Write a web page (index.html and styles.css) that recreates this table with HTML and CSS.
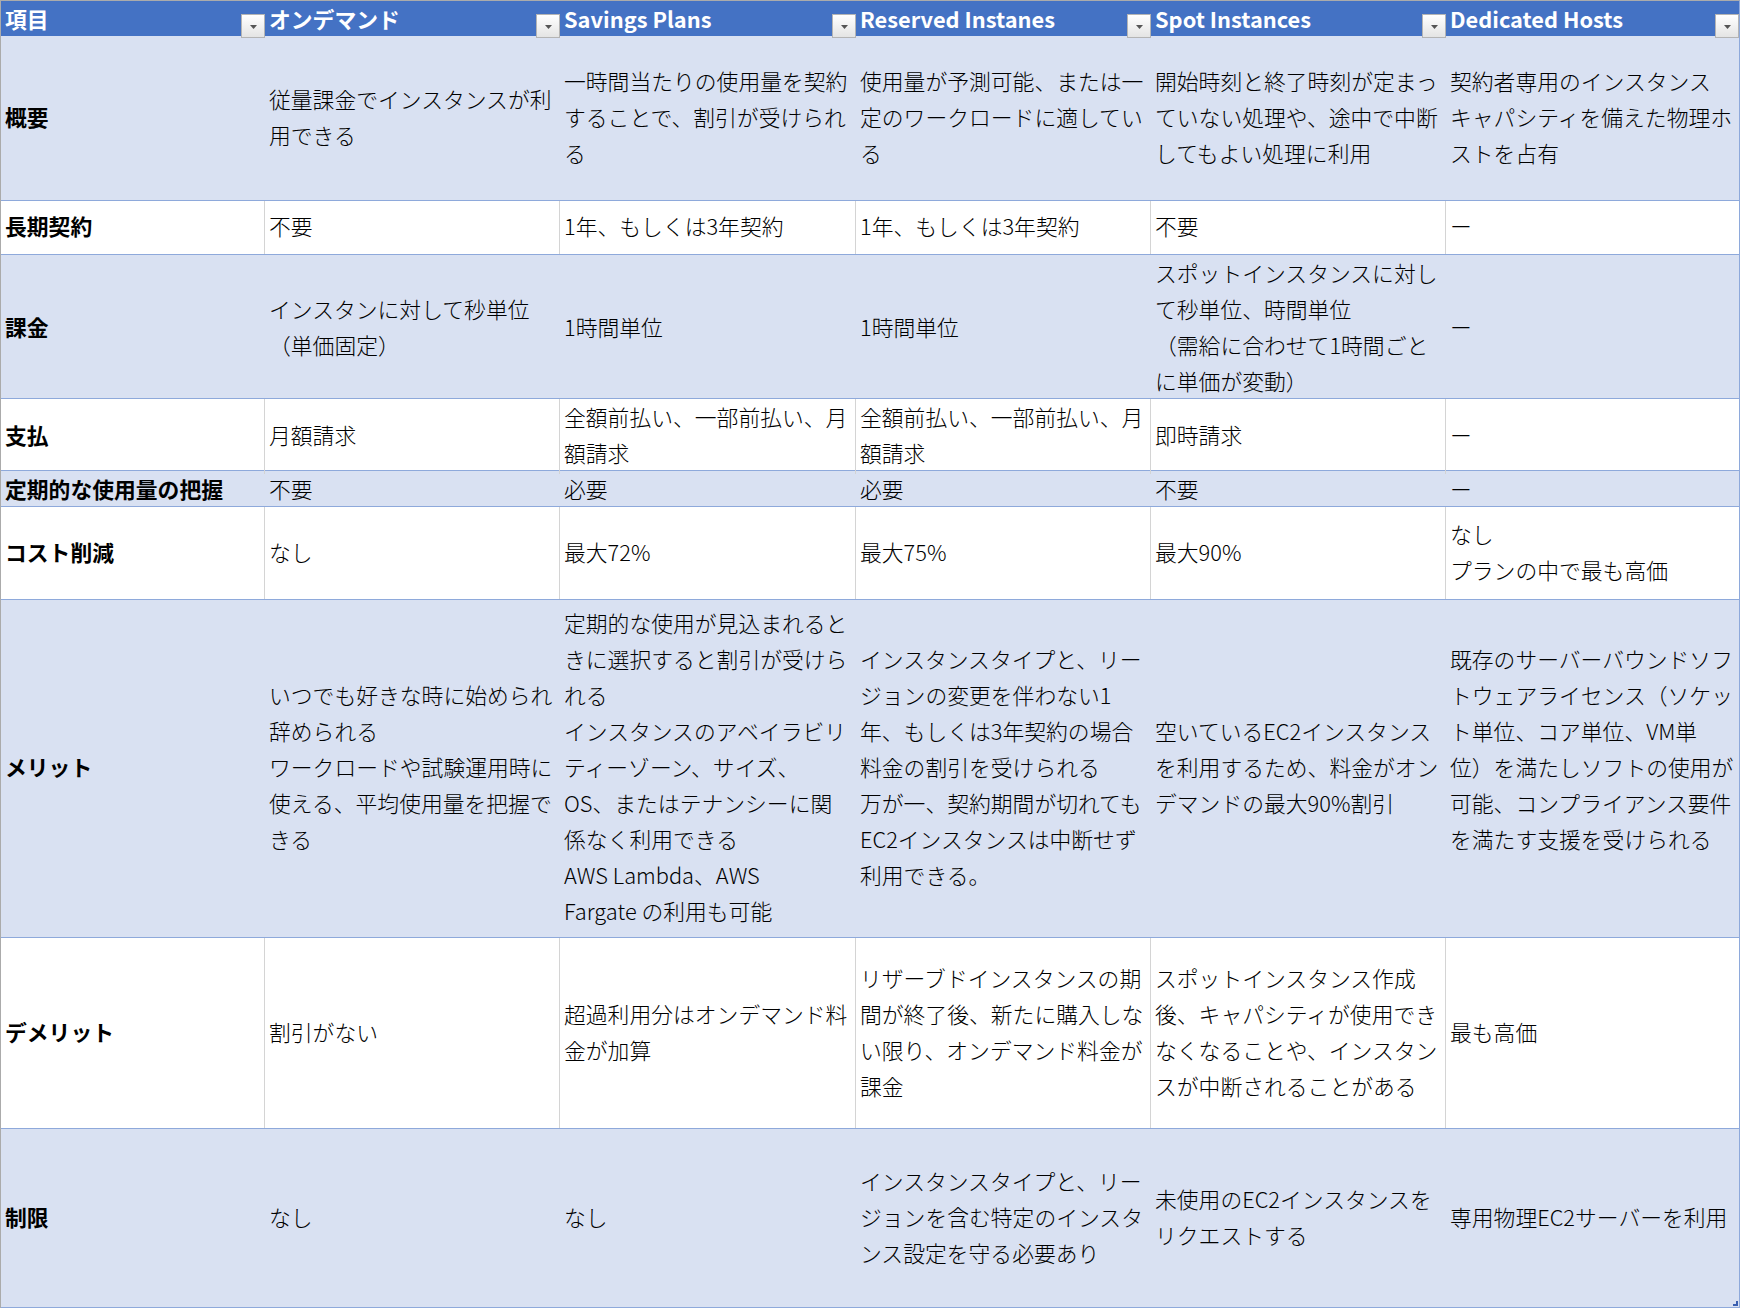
FILE: index.html
```html
<!DOCTYPE html>
<html lang="ja">
<head>
<meta charset="utf-8">
<title>EC2 料金プラン比較</title>
<link rel="stylesheet" href="styles.css">
</head>
<body>
<div class="sheet">
  <div class="row head">
    <div class="hc"><span class="ht">項目</span><span class="dd"><svg width="7" height="4" viewBox="0 0 7 4"><polygon points="0,0 7,0 3.5,4" fill="#555"/></svg></span></div>
    <div class="hc"><span class="ht">オンデマンド</span><span class="dd"><svg width="7" height="4" viewBox="0 0 7 4"><polygon points="0,0 7,0 3.5,4" fill="#555"/></svg></span></div>
    <div class="hc"><span class="ht">Savings Plans</span><span class="dd"><svg width="7" height="4" viewBox="0 0 7 4"><polygon points="0,0 7,0 3.5,4" fill="#555"/></svg></span></div>
    <div class="hc"><span class="ht">Reserved Instanes</span><span class="dd"><svg width="7" height="4" viewBox="0 0 7 4"><polygon points="0,0 7,0 3.5,4" fill="#555"/></svg></span></div>
    <div class="hc"><span class="ht">Spot Instances</span><span class="dd"><svg width="7" height="4" viewBox="0 0 7 4"><polygon points="0,0 7,0 3.5,4" fill="#555"/></svg></span></div>
    <div class="hc"><span class="ht">Dedicated Hosts</span><span class="dd"><svg width="7" height="4" viewBox="0 0 7 4"><polygon points="0,0 7,0 3.5,4" fill="#555"/></svg></span></div>
  </div>

  <div class="row band r1">
    <div class="c key">概要</div>
    <div class="c">従量課金でインスタンスが利<br>用できる</div>
    <div class="c">一時間当たりの使用量を契約<br>することで、割引が受けられ<br>る</div>
    <div class="c">使用量が予測可能、または一<br>定のワークロードに適してい<br>る</div>
    <div class="c">開始時刻と終了時刻が定まっ<br>ていない処理や、途中で中断<br>してもよい処理に利用</div>
    <div class="c">契約者専用のインスタンス<br>キャパシティを備えた物理ホ<br>ストを占有</div>
  </div>

  <div class="row plain r2">
    <div class="c key">長期契約</div>
    <div class="c">不要</div>
    <div class="c">1年、もしくは3年契約</div>
    <div class="c">1年、もしくは3年契約</div>
    <div class="c">不要</div>
    <div class="c">ー</div>
  </div>

  <div class="row band r3">
    <div class="c key">課金</div>
    <div class="c">インスタンに対して秒単位<br>（単価固定）</div>
    <div class="c">1時間単位</div>
    <div class="c">1時間単位</div>
    <div class="c">スポットインスタンスに対し<br>て秒単位、時間単位<br>（需給に合わせて1時間ごと<br>に単価が変動）</div>
    <div class="c">ー</div>
  </div>

  <div class="row plain r4">
    <div class="c key">支払</div>
    <div class="c">月額請求</div>
    <div class="c">全額前払い、一部前払い、月<br>額請求</div>
    <div class="c">全額前払い、一部前払い、月<br>額請求</div>
    <div class="c">即時請求</div>
    <div class="c">ー</div>
  </div>

  <div class="row band r5">
    <div class="c key">定期的な使用量の把握</div>
    <div class="c">不要</div>
    <div class="c">必要</div>
    <div class="c">必要</div>
    <div class="c">不要</div>
    <div class="c">ー</div>
  </div>

  <div class="row plain r6">
    <div class="c key">コスト削減</div>
    <div class="c">なし</div>
    <div class="c">最大72%</div>
    <div class="c">最大75%</div>
    <div class="c">最大90%</div>
    <div class="c">なし<br>プランの中で最も高価</div>
  </div>

  <div class="row band r7">
    <div class="c key">メリット</div>
    <div class="c">いつでも好きな時に始められ<br>辞められる<br>ワークロードや試験運用時に<br>使える、平均使用量を把握で<br>きる</div>
    <div class="c">定期的な使用が見込まれると<br>きに選択すると割引が受けら<br>れる<br>インスタンスのアベイラビリ<br>ティーゾーン、サイズ、<br>OS、またはテナンシーに関<br>係なく利用できる<br>AWS Lambda、AWS<br>Fargate の利用も可能</div>
    <div class="c">インスタンスタイプと、リー<br>ジョンの変更を伴わない1<br>年、もしくは3年契約の場合<br>料金の割引を受けられる<br>万が一、契約期間が切れても<br>EC2インスタンスは中断せず<br>利用できる。</div>
    <div class="c">空いているEC2インスタンス<br>を利用するため、料金がオン<br>デマンドの最大90%割引</div>
    <div class="c">既存のサーバーバウンドソフ<br>トウェアライセンス（ソケッ<br>ト単位、コア単位、VM単<br>位）を満たしソフトの使用が<br>可能、コンプライアンス要件<br>を満たす支援を受けられる<br>&nbsp;</div>
  </div>

  <div class="row plain r8">
    <div class="c key">デメリット</div>
    <div class="c">割引がない</div>
    <div class="c">超過利用分はオンデマンド料<br>金が加算</div>
    <div class="c">リザーブドインスタンスの期<br>間が終了後、新たに購入しな<br>い限り、オンデマンド料金が<br>課金</div>
    <div class="c">スポットインスタンス作成<br>後、キャパシティが使用でき<br>なくなることや、インスタン<br>スが中断されることがある</div>
    <div class="c">最も高価</div>
  </div>

  <div class="row band r9">
    <div class="c key">制限</div>
    <div class="c">なし</div>
    <div class="c">なし</div>
    <div class="c">インスタンスタイプと、リー<br>ジョンを含む特定のインスタ<br>ンス設定を守る必要あり</div>
    <div class="c">未使用のEC2インスタンスを<br>リクエストする</div>
    <div class="c">専用物理EC2サーバーを利用</div>
  </div>

  <span class="grip"><svg width="5" height="5" viewBox="0 0 5 5"><polygon points="5,0 5,5 0,5 0,3 3,3 3,0" fill="#3a5fb0"/></svg></span>
</div>
</body>
</html>
```

FILE: styles.css
```css
html, body {
  margin: 0;
  padding: 0;
  background: #ffffff;
}

.sheet {
  position: relative;
  width: 1740px;
  box-sizing: border-box;
  border-top: 1px solid #ababab;
  border-left: 1px solid #ababab;
  border-right: 1px solid #8ea9db;
  font-family: "Noto Sans CJK JP", "Noto Sans", sans-serif;
  font-size: 21.8px;
  font-weight: 300;
  line-height: 36px;
  color: #000000;
}

.row {
  display: grid;
  grid-template-columns: 264px 295px 296px 295px 295px 293px;
  box-sizing: border-box;
  border-bottom: 1px solid #8ea9db;
}

.head {
  height: 35px;
  border-bottom: none;
  background: #4472c4;
  color: #ffffff;
  font-weight: bold;
}

.hc {
  display: flex;
  justify-content: space-between;
  align-items: center;
  padding-left: 4px;
  padding-bottom: 2px;
  min-width: 0;
}

.ht {
  white-space: nowrap;
}

.dd {
  align-self: flex-end;
  margin-bottom: -1px;
  width: 24px;
  height: 24px;
  box-sizing: border-box;
  border: 1px solid #b4b4b4;
  background: linear-gradient(#ffffff, #e4e4e4);
  display: flex;
  align-items: center;
  justify-content: center;
  flex-shrink: 0;
}

.dd svg {
  display: block;
  margin-top: 1px;
}

.band {
  background: #d9e1f2;
}

.plain {
  background: #ffffff;
}

.c {
  display: flex;
  align-items: center;
  padding-left: 4px;
  padding-bottom: 3px;
  white-space: nowrap;
  box-sizing: border-box;
  min-width: 0;
}

.plain .c {
  border-right: 1px solid #d4d4d4;
}

.plain .c:last-child {
  border-right: none;
}

.key {
  font-weight: bold;
}

.r1 { height: 165px; }
.r2 { height: 54px; }
.r3 { height: 144px; }
.r4 { height: 72px; }
.r5 { height: 36px; }
.r6 { height: 93px; }
.r7 { height: 338px; }
.r8 { height: 191px; }
.r9 { height: 179px; }

.grip {
  position: absolute;
  right: 1px;
  bottom: 2px;
  line-height: 0;
}
```
